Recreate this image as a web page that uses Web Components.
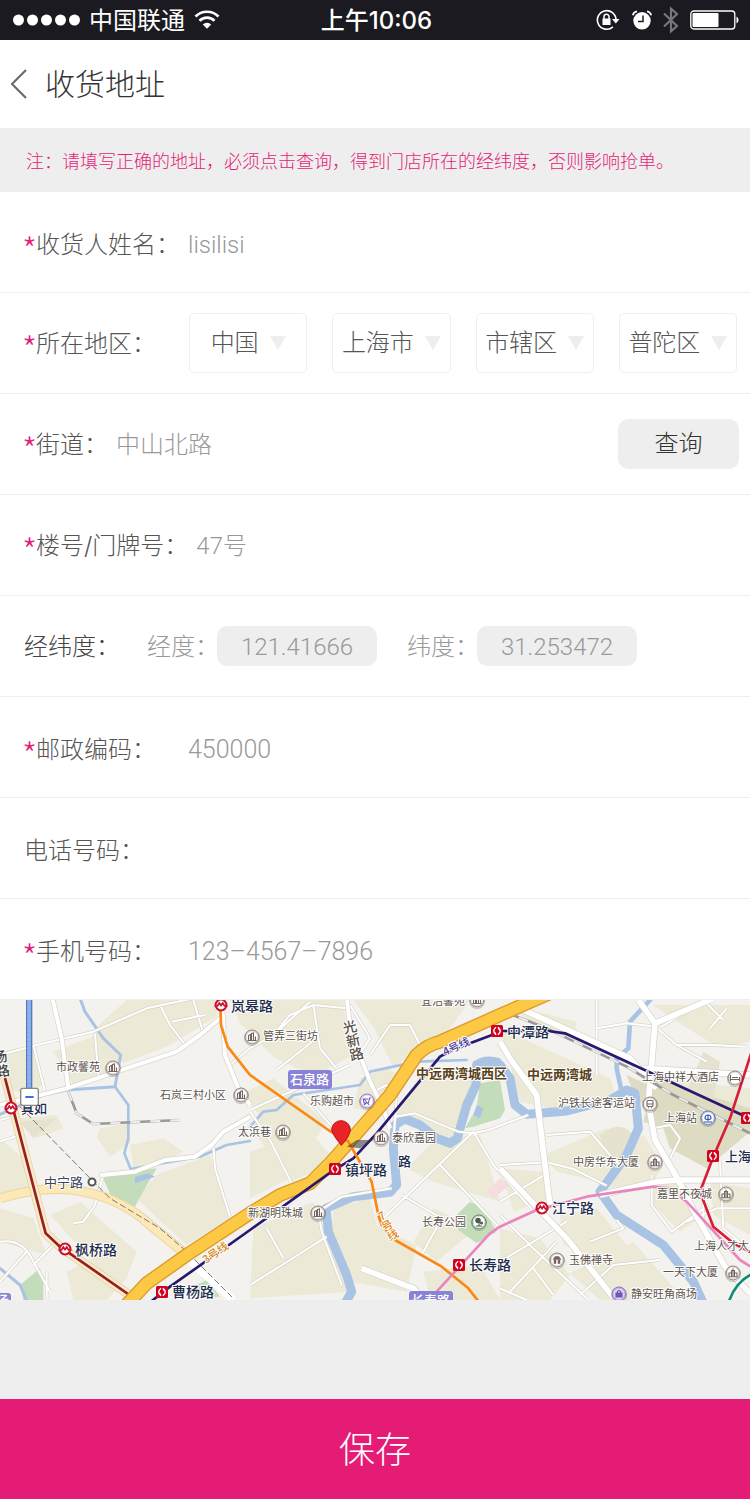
<!DOCTYPE html>
<html lang="zh-CN">
<head>
<meta charset="utf-8">
<meta name="viewport" content="width=device-width, initial-scale=1">
<title>收货地址</title>
<style>
  html, body { margin: 0; }
  body {
    background: #eee;
    color: #666;
    font-family: Inter, "Noto Sans CJK SC", sans-serif;
    font-size: 24px;
    font-weight: 300;
    line-height: 36px;
  }
</style>
</head>
<body>
<address-page></address-page>

<script>
const define = (name, html, setup) => {
  const template = document.createElement('template');
  template.innerHTML = html;
  customElements.define(name, class extends HTMLElement {
    connectedCallback() {
      if (this.shadowRoot) return;
      const root = this.attachShadow({ mode: 'open' });
      root.append(template.content.cloneNode(true));
      if (setup) setup(this, root);
    }
  });
};

/* ---------- status bar ---------- */
define('status-bar', `
<style>
  :host { display: grid; grid-template-columns: 1fr auto 1fr; align-items: center; height: 40px;
    padding: 0 10px 0 13px; background: #1b1a20; color: #fff; font-weight: 400; }
  .left, .right { display: flex; align-items: center; }
  .right { justify-content: flex-end; }
  .left { gap: 9px; }
  span { padding-top: 2px; }
  .time { font-weight: 500; }
  svg { display: block; flex: none; }
  .lock { margin-right: 12px; } .alarm { margin-right: 11px; } .bt { margin-right: 11px; }
</style>
<div class="left">
  <svg width="67" height="12" fill="#fff"><circle cx="5.500" cy="6" r="5.500"/><circle cx="19.500" cy="6" r="5.500"/><circle cx="33.500" cy="6" r="5.500"/><circle cx="47.500" cy="6" r="5.500"/><circle cx="61.500" cy="6" r="5.500"/></svg>
  <span>中国联通</span>
  <svg width="26" height="20" viewBox="0 0 26 20" fill="none" stroke="#fff" stroke-width="2.700"><path d="M1.500 6.500a16.300 16.300 0 0 1 23 0"/><path d="M5.500 10.700a10.600 10.600 0 0 1 15 0"/><path d="M13 18.800 8.800 14.500a6 6 0 0 1 8.400 0z" fill="#fff" stroke="none"/></svg>
</div>
<span class="time">上午10:06</span>
<div class="right">
  <svg class="lock" width="24" height="22" viewBox="0 0 24 22" fill="none" stroke="#fff" stroke-width="1.600"><path d="M16.900 17.900A9.300 9.300 0 1 1 20 11"/><path d="M16 10h7.500L19.800 14.500z" fill="#fff" stroke="none"/><rect x="6.500" y="9.500" width="8" height="6.500" fill="#fff" stroke="none"/><path d="M8 10V7.700a2.500 2.500 0 0 1 5 0V10" stroke-width="1.500"/></svg>
  <svg class="alarm" width="20" height="20" viewBox="0 0 20 20" fill="none"><circle cx="10" cy="10.800" r="8.700" fill="#fff"/><path d="M.8 5.200A5 5 0 0 1 5 1.300M19.200 5.200A5 5 0 0 0 15 1.300" stroke="#fff" stroke-width="1.700"/><path d="M11 5.500v6H6" stroke="#1b1a20" stroke-width="1.500"/></svg>
  <svg class="bt" width="16" height="28" viewBox="0 0 16 28" fill="none" stroke="#77767b" stroke-width="2.200"><path d="M1 7.500 14 20l-6 5.300V2.700L14 8 1 20.500"/></svg>
  <svg width="50" height="20" viewBox="0 0 50 20"><rect x=".800" y="1" width="44" height="18" rx="3" fill="none" stroke="#fff" stroke-width="1.300"/><rect x="2.500" y="3" width="26" height="14" rx="1" fill="#fff"/><path d="M46.500 6.500a4 4 0 0 1 0 7z" fill="#fff"/></svg>
</div>`);

/* ---------- page header ---------- */
define('page-header', `
<style>
  :host { display: flex; align-items: center; gap: 18px; height: 88px; padding: 0 10px; background: #fff; color: #333; }
  a { display: block; }
  svg { display: block; }
  h1 { margin: 0; font-size: 30px; font-weight: 300; line-height: 44px; }
</style>
<a href="#back" aria-label="返回"><svg width="17" height="30" viewBox="0 0 17 30" fill="none" stroke="#666" stroke-width="2"><path d="M16 1 2 15l14 14"/></svg></a>
<h1><slot></slot></h1>`);

define('notice-bar', `
<style>
  :host { display: block; padding: 20px 26px 16px; background: #eee; color: #e41c78; font-size: 18px; line-height: 28px; }
</style><slot></slot>`);

/* ---------- form rows ---------- */
define('form-row', `
<style>
  :host { display: flex; box-sizing: border-box; align-items: center; gap: 8px; min-height: 101px; padding: 0 11px 0 24px;
    background: #fff; border-bottom: 1px solid #eee; }
  :host([low]) { padding-top: 4px; }
</style><slot></slot>`);

const labelCss = `
  label, .label { flex: none; min-width: 156px; padding-top: 2px; color: #555; white-space: nowrap; }
  :host([compact]) label { min-width: 0; }
  :host([required]) label::before, :host([required]) .label::before {
    content: "*"; display: inline-block; width: 12px; color: #e41c78; font-family: "Noto Sans CJK SC", sans-serif;
    font-size: 34px; line-height: 0; text-indent: -2px; vertical-align: -10px; }`;

define('text-field', `
<style>
  :host { display: flex; flex: 1; align-items: center; gap: 8px; min-width: 0; }
  ${labelCss}
  input { flex: 1; min-width: 0; height: 36px; margin: 0; padding: 2px 0 0; border: 0; outline: 0;
    background: none; color: #999; font: inherit; font-family: Roboto, "Noto Sans CJK SC", sans-serif; }
  :host([numeric]) input { font-size: 25px; }
</style>
<label for="field"></label><input id="field" type="text">`,
(host, root) => {
  root.querySelector('label').textContent = host.getAttribute('label');
  root.querySelector('input').value = host.getAttribute('value') || '';
});

define('select-box', `
<style>
  :host { display: flex; align-items: center; justify-content: center; gap: 11px; height: 58px;
    border: 1px solid #eee; border-radius: 5px; }
  select { appearance: none; margin: 0; padding: 0; border: 0; outline: 0; background: none;
    color: #555; font: inherit; height: 36px; }
  svg { display: block; flex: none; }
</style>
<select><option></option></select>
<svg width="16" height="14" fill="#eee"><path d="M0 0h16L8 14z"/></svg>`,
(host, root) => {
  const select = root.querySelector('select');
  select.setAttribute('aria-label', host.getAttribute('label'));
  select.options[0].textContent = host.getAttribute('value');
  select.style.width = host.getAttribute('value').length + 'em';
});

define('region-field', `
<style>
  :host { display: flex; flex: 1; align-items: center; gap: 9px; padding-right: 2px; }
  ${labelCss}
  .boxes { flex: 1; display: grid; grid-template-columns: repeat(4, 1fr); gap: 25px; }
</style>
<span class="label">所在地区：</span>
<div class="boxes">
  <select-box label="国家" value="中国"></select-box>
  <select-box label="省市" value="上海市"></select-box>
  <select-box label="城市" value="市辖区"></select-box>
  <select-box label="区县" value="普陀区"></select-box>
</div>`);

define('coordinate-field', `
<style>
  :host { display: flex; align-items: center; gap: 30px; }
  .label { flex: none; width: 93px; padding-top: 2px; color: #444; white-space: nowrap; }
  .pair { display: flex; align-items: center; color: #999; }
  .pair label { width: 70px; padding-top: 2px; white-space: nowrap; }
  input { box-sizing: border-box; width: 160px; height: 40px; margin: 0; padding: 2px 0 0; border: 0; border-radius: 10px;
    outline: 0; background: #eee; color: #999; font: inherit; font-family: Roboto, sans-serif; text-align: center; }
</style>
<span class="label">经纬度：</span>
<div class="pair"><label for="lng">经度：</label><input id="lng" type="text" value="121.41666"></div>
<div class="pair"><label for="lat">纬度：</label><input id="lat" type="text" value="31.253472"></div>`);

define('query-button', `
<style>
  :host { display: block; flex: none; }
  button { width: 121px; height: 50px; padding: 0; border: 0; border-radius: 10px; background: #eee;
    color: #333; font: inherit; }
</style><button type="button"><slot></slot></button>`);

define('save-button', `
<style>
  :host { display: block; padding-top: 99px; }
  button { display: block; width: 100%; height: 100px; padding: 2px 0 0; border: 0; background: #e51c76; color: #fff;
    font: inherit; font-size: 36px; }
</style><button type="submit"><slot></slot></button>`);

/* ---------- map ---------- */
const NAVY = '#1c2b4c', BROWN = '#5c524b';
const stations = [['岚皋路',231,6],['中潭路',507,32],['枫桥路',75,250],['曹杨路',172,292],['镇坪路',345,170],
  ['江宁路',552,208],['长寿路',469,265],['上海',725,156],['真如',21,108],['路',398,161]];
const places = [['市政馨苑',56,67],['石岚三村小区',160,95],['太浜巷',238,132],['管弄三街坊',263,36],['乐购超市',310,101],
  ['泰欣嘉园',392,138],['新湖明珠城',248,213],['长寿公园',422,222],['宜浩馨苑',421,1],['玉佛禅寺',569,260],
  ['中房华东大厦',573,162],['沪铁长途客运站',558,103],['上海站',664,118],['上海中祥大酒店',642,77],
  ['嘉里不夜城',657,194],['上海人才大',694,246],['一天下大厦',663,272],['静安旺角商场',631,294]];
const text = (t, x, y, size, fill, extra = '') =>
  `<text x="${x}" y="${y + Math.round(size * .37)}" font-size="${size}" fill="${fill}" ${extra}>${t}</text>`;
const column = (t, x, y, size, fill, angle) =>
  `<text class="column" x="${x}" y="${y}" font-size="${size}" fill="${fill}" transform="rotate(${angle} ${x} ${y})">${t}</text>`;

const glyphs = {
  house: '<path d="M-3.500 3.500v-5l2-1v6M-.5 3.500v-7l2-.500v7.500M3.500 3.500v-4M-4.500 3.500h9"/>',
  tower: '<path d="M0-4.500V-3M-1.500 3.500v-6h3v6M-4 3.500V0h2.500M4 3.500V0H1.500M-4.500 3.700h9M0-2v5"/>',
  bus: '<rect x="-3" y="-3.500" width="6" height="6" rx="1"/><path d="M-3 0h6M-2 3.800h1M1 3.800h1"/>',
  bed: '<path d="M-4.500-3v6M-4.500 1.500h9M4.500-1v4M-3-.5h6"/>',
  tree: '<path d="M0 4V0M-3 4h6"/><circle cx="-1" cy="-1.500" r="2.200" fill="currentColor"/><circle cx="2.500" cy="1" r="1" fill="currentColor"/>',
  temple: '<path d="M-2-3.500h4l2 3h-8zM-3 0h2v3.500h-2zM1 0h2v3.500H1z" fill="currentColor" stroke-width=".5"/>',
  train: '<path d="M-3 0a3 3 0 1 1 6 0c0 2-6 2-6 0M-4 4h8M0-3v6"/>',
  cart: '<path d="M4-3H2.500l-1 5H-3l-.8-4h5M2 4l-5-6M-3 4l3-3"/>',
  bag: '<path d="M-3-1h6v4h-6z" fill="currentColor"/><path d="M-1.500-1v-1.500q1.500-2 3 0V-1"/>'
};
const pin = (kind, x, y, color = '#75645d', fill = '#fff') =>
  `<g transform="translate(${x} ${y})" color="${color}" stroke="currentColor" stroke-width="1.100" fill="none"><circle cy="1" r="7.500" stroke="#000" stroke-opacity=".2"/><circle r="7" fill="${fill}" stroke-width=".800"/><circle r="6" stroke-width=".300"/>${glyphs[kind]}</g>`;
const square = (x, y) => `<g transform="translate(${x} ${y})"><rect x="-6" y="-6" width="12" height="12" rx="1.500" fill="#d0021f"/><path d="M-1-3.700q-4.500 3.700 0 7.400M1-3.700q4.500 3.700 0 7.400M-2.500 1l1.500 2.700M2.500-1 1-3.700" fill="none" stroke="#fff" stroke-width="1.400"/></g>`;
const metro = (x, y) => `<g transform="translate(${x} ${y})"><circle r="5.400" fill="#fff" stroke="#c9102c" stroke-width="2"/><path d="M-6.500 1h3l1.800-3L0 .5 1.700-2l1.800 3h3" fill="none" stroke="#c9102c" stroke-width="1.700"/></g>`;

const minorRoads = 'M0 180l110-30 170-40 160-70 140-30M480 30l30 60 50 65M580 15l30 100M515 80l100-20M285 115l10 130M100 150l35 140M0 440l60-20M0 375l40-10M220 685l30-5 35-50 25-90M640 450l5 70 45 145M750 350l60 85 65 130M690 210l60-50 70-40 110-100M820 120l50-60 70-30 100 10M830 225L950 130M940 30l20 130 50 60M750 870l120-75 110-70M800 700l50 90M750 345L1050 210M910 295L1000 400M1050 30l60 100-40 60M1110 180l60-90h60l30 60M1120 290l40-20 30 40-10 130M1185 365l60-10 70 30 60 25 45 5 45-10 120-45M1175 580l-150 25-70 45 10 60 60 160M1420 410L1150 670M1320 510l180 190M1205 600l120 70-60 110M1420 410l60 100 130 150M1640 420l130-10 60 70 30 30M1790 240l0-225M1790 100l90-15 90 10M1500 510l140-8 80 20 100 50M1500 620l150-90M1500 660l100 100 160 150M1500 800l200-120M1530 890l140-150M1600 820l60 80M1500 880l80 35M1770 740l100-40-20-25M1740 900l100-90 140-15M1960 400l50-10 30 40-30 60M1960 90l70 60h110l100 5M2030 150l90 50M2110 550v120M1955 540l0 90 60 80 110-80M2250 640h-100l-90 40M2160 500l10 200 70 60M2110 15l60 60M2130 100l50-60M1985 95l130-80M0 740q70-10 100 60l50 90M100 810l60-60M0 860l80-90M140 830v80';
const mainRoads = 'M0 330l200-50 330-110 70-50 60-50M155 0l30 130 20 150M665 0l10 180 40 100 35 50M750 365l-80 45-35 40-50 35-90 10-90 35-100 10H310M1040 0l10 100 60 160 40 80 20 60';
const avenues = 'M1915 15l50 70-20 240 20 110 70 120 50 100 90 160 75 80M1500 140l30 50 80 110 20 170 20 160M1560 40l330 150 80 90M1500 520l200 210 150 190M1930 220l320 20M2030 555h220M1800 600l170-40 70-5M1965 85L2140 10M1085 820l155 60 35 40';
const road = (d, width) => `<path d="${d}" stroke="#d6d3c8" stroke-width="${width + 4}"/><path d="${d}" stroke="#fff" stroke-width="${width}"/>`;

define('city-map', `
<style>
  :host { display: block; }
  svg { display: block; width: 100%; height: auto; font-family: "Noto Sans CJK SC", sans-serif; font-weight: 500; }
  .halo text { paint-order: stroke; stroke: #fff; stroke-width: 2px; stroke-linejoin: round; }
  .halo .place text { font-weight: 400; }
  .column { writing-mode: vertical-rl; text-orientation: upright; }
</style>
<svg viewBox="0 0 750 300" role="img" aria-label="地图">
<rect width="750" height="300" fill="#f3f2ef"/>
<g transform="translate(0 -5) scale(.333333)" fill="none" stroke-linejoin="round">
  <g fill="#ecead7">
    <path d="M380 15h270v50l-150 90-130 50-90-100zM290 120l70 60-10 50-130 40-60-100zM0 170l100-20 30 120-60 30-60-30z"/>
    <path d="M60 370l110-10 20 40-80 30zM0 430l70 60 30 100-100 20zM300 400l90-15 0 60-60 40-40-60zM390 450l100-20 60 40-60 30-90 20z"/>
    <path d="M470 540l160-60 60 190-130 80-120-110-30-30zM150 660l90-40 170 150-30 80-110-60zM0 640l100 30 40 110-140-40zM200 830l120-60 60 80-60 65H220z"/>
    <path d="M690 15h340l20 170-110 60-120-60-100-100zM720 300l100-50 160 130-60 90-120-90zM780 330l150 80 80 90-140 60-110-150z"/>
    <path d="M1060 15h150l200 0-70 100-160 100-60-120zM1080 250l80-30 40 20-80 110-60-10zM1260 240l170-20 0 80-60 150-110-70-80-20z"/>
    <path d="M750 470l90-30 30 110-120 60zM760 700l180-80 30 80 90 190-310 20zM1000 640l110-30 20 80 120 60-30 140-170-30-60-80z"/>
    <path d="M1220 520l90-90 130-10 60 200-200-60zM1300 640l130 60-120 100-70-60zM1500 100l330 150 20 60-200 30-90-20zM1530 30l200 50-10 50-120-40z"/>
    <path d="M1960 30l290 0v110l-90 20-130-80zM1980 250l270 30v80l-200 0zM1630 480l190-80 70 50-90 110-130-30z"/>
    <path d="M1680 660l110-20 90 110-30 60-160-60zM1500 700l120 30 90 110-60 75h-150zM1960 560l100 10 40 100-60 40-80-80zM2130 560l120 20v140l-110-60zM1500 520l130 10 20 80-110 40z"/>
    <path d="M1900 740l140 160-20 15h-220l-90-80zM1270 830l170-20 60 105h-210zM1840 480l90-60 60 90-30 50-140 20z"/>
  </g>
  <path d="M1960 250l290 90v70l-130 110-110-60-20-60-60-20zM1880 240l110 50 30 50-110-20z" fill="#dedbc3"/>
  <path d="M2110 170l50 30-20 120-80-30zM1800 420q60-50 100 0l-20 60-60 20zM60 380l110-10-70 60z" fill="#e5e2d0"/>
  <path d="M1500 550l30 20-50 40-20-20z" fill="#f6dbe0"/>
  <g fill="#c3ddba">
    <path d="M305 542l165-22-35 60-30 55-70-30z"/><path d="M60 870l60-50 10 40 0 55H70z"/>
    <path d="M1440 265l60-10 15 90-15 25-80 25-25 5 35-60z"/><path d="M1370 660l40-40 40 20 40 70-60 35-55-40z"/><path d="M570 880l50-25 40 50h-70z"/>
  </g>
  <g stroke="#a9c3e4" stroke-linecap="round">
    <path d="M242 15L255 50 310 130 362 180 345 275 200 285 130 300 0 358" stroke-width="9"/>
    <path d="M345 275L385 330V430L373 475 392 522 600 485 680 450 750 438M750 395L790 350 830 345 880 300 1080 270 1110 230 1250 200 1400 195" stroke-width="8"/>
    <path d="M1035 925L1055 890 1040 840 985 710 978 640 1060 605 1170 592 1190 570 1180 460 1185 390 1215 372 1260 390 1310 430 1350 445 1372 430 1400 330 1428 270 1430 210 1500 210 1530 250 1545 330 1580 358 1700 348 1830 315 1880 285 1905 295 1915 400 1880 480 1800 590 1850 660 1990 750 2080 860 2110 925" stroke-width="27"/>
    <path d="M1950 15L1890 80 1885 160 1850 190V220L1865 290" stroke-width="14"/>
    <path d="M0 820l60 50 20 45" stroke-width="9"/>
  </g>
  <path d="M1420 200q35-25 80-10l20 30-60 30-50 0zM405 545l40-10 20 10-60 20zM1430 330l20 10-10 30-20-10z" fill="#a9c3e4"/>
  ${road(minorRoads, 6)}
  ${road(mainRoads, 12)}
  ${road(avenues, 17)}
  <path d="M0 610Q150 565 260 592Q370 615 450 690L555 775" stroke="#e9d7a5" stroke-width="30"/>
  <path d="M0 610Q150 565 260 592Q370 615 450 690L555 775" stroke="#fde8b8" stroke-width="24"/>
  <path d="M560 790L700 915" stroke="#fff" stroke-width="22"/>
  <path d="M10 230L137 715 180 755 410 915" stroke="#e3d3a8" stroke-width="28"/>
  <path d="M10 230L137 715 180 755 410 915" stroke="#fdebc5" stroke-width="23"/>
  <path d="M10 230L137 715 180 755 410 915" stroke="#93202b" stroke-width="8"/>
  <path d="M205 290l25 65 50 32 260-12M1500 45L1640 100 1880 215 2020 300 2250 415" stroke="#999" stroke-width="8"/>
  <path d="M205 290l25 65 50 32 260-12M1500 45L1640 100 1880 215 2020 300 2250 415" stroke="#eee" stroke-width="6" stroke-dasharray="30 30"/>
  <path d="M60 335L290 570 330 610 480 700 560 770 700 910" stroke="#777" stroke-width="3" stroke-dasharray="20 8"/>
  <path d="M370 940L440 865 560 780 750 655 840 600 930 565 990 505 1070 415 1170 300 1250 180Q1280 150 1320 140L1500 60 1660 -10" stroke="#dc9a28" stroke-width="42"/>
  <path d="M370 940L440 865 560 780 750 655 840 600 930 565 990 505 1070 415 1170 300 1250 180Q1280 150 1320 140L1500 60 1660 -10" stroke="#fdc944" stroke-width="34"/>
  <g stroke-width="8">
    <path d="M440 930L510 875 750 705 995 530 1060 490 1130 415 1320 185Q1370 155 1410 145L1470 122 1500 108H1645L1695 115 2220 357 2260 375" stroke="#29186f"/>
    <path d="M661 30L663 90 683 155 750 240 985 405 1045 440 1085 510 1115 560 1135 660 1145 690 1185 735 1325 815 1405 880 1440 925" stroke="#fb8810"/>
    <path d="M1310 890L1470 715 1500 695 1610 645 1760 605 1960 575 2010 580 2060 620 2220 795 2260 820" stroke="#e886bd"/>
    <path d="M2255 170L2190 370 2140 485 2100 590 2140 695 2200 745 2260 775" stroke="#d81e35"/>
    <path d="M2185 925Q2205 860 2260 835" stroke="#0c8c72"/>
  </g>
  <path d="M1040 455l30-20h50l-40 25z" fill="#333" opacity=".55"/>
  <path d="M1024 451q-25-30-29-46a28 28 0 1 1 56 0q-2 20-27 46z" fill="#ea2329" stroke="#b30f16" stroke-width="3"/>
  <rect x="80" y="0" width="15" height="285" fill="#7fa6e8" stroke="#5479bd" stroke-width="4"/>
  <path d="M87 15v260" stroke="#8fb2ec" stroke-width="10" stroke-dasharray="12 2"/>
</g>
<g class="halo">
  ${stations.map(([t, x, y]) => text(t, x, y, t.length < 3 ? 13 : 14, NAVY)).join('')}
  <g class="place">${text('中宁路', 44, 182, 13, '#3b4358')}${places.map(([t, x, y]) => text(t, x, y, 11, BROWN)).join('')}</g>
  ${text('中远两湾城西区', 416, 73, 13, '#5a4218', 'font-weight="700"')}
  ${text('中远两湾城', 527, 74, 13, '#5a4218', 'font-weight="700"')}
  ${column('光新路', 348, 20, 14, BROWN, -14)}
  ${column('杨路', -1, 50, 14, '#444', -10)}
  <text x="445" y="56" font-size="11" fill="#4b3b96" transform="rotate(-25 445 56)">4号线</text>
  <text x="206" y="264" font-size="11" fill="#d98a22" transform="rotate(-35 206 264)">3号线</text>
  ${column('7号线', 379, 211, 11, '#e08412', -30)}
</g>
<g transform="translate(0 -5) scale(.333333)"><rect x="62" y="280" width="53" height="51" rx="6" fill="#fff" stroke="#888" stroke-width="4"/><path d="M76 306h25" stroke="#3376d8" stroke-width="6"/></g>
<g fill="#8883d6"><rect x="288" y="70" width="44" height="19" rx="3"/><rect x="409" y="291" width="44" height="18" rx="3"/><rect x="-5" y="293" width="16" height="18" rx="3"/></g>
${text('石泉路', 290, 79, 13, '#fff')}${text('长寿路', 411, 300, 13, '#fff')}${text('汤', -4, 300, 13, '#fff')}
${[[221,5],[65,249],[11,108],[542,208]].map(p => metro(...p)).join('')}
${[[497,31],[162,292],[335,169],[459,265],[713,156],[747,118]].map(p => square(...p)).join('')}
<circle cx="92" cy="182" r="3.500" fill="#fff" stroke="#555" stroke-width="2"/>
${[[113,68],[241,95],[283,132],[252,37],[381,138],[318,213],[477,0]].map(p => pin('house', ...p)).join('')}
${[[655,162],[726,194],[733,273]].map(p => pin('tower', ...p)).join('')}
${pin('bus', 650, 104)}${pin('bed', 735, 78)}${pin('tree', 479, 222, '#466049')}${pin('temple', 557, 260)}
${pin('train', 708, 118, '#3555a8')}${pin('cart', 367, 101, '#7759b5')}${pin('bag', 619, 294, '#7455b5', '#dcd2f3')}
</svg>`);

/* ---------- page ---------- */
define('address-page', `
<style>
  :host { display: block; }
  form { display: block; margin: 0; }
</style>
<status-bar></status-bar>
<page-header>收货地址</page-header>
<notice-bar>注：请填写正确的地址，必须点击查询，得到门店所在的经纬度，否则影响抢单。</notice-bar>
<form>
  <form-row low><text-field required label="收货人姓名：" value="lisilisi"></text-field></form-row>
  <form-row><region-field required></region-field></form-row>
  <form-row><text-field required compact label="街道：" value="中山北路"></text-field><query-button>查询</query-button></form-row>
  <form-row><text-field required compact label="楼号/门牌号：" value="47号"></text-field></form-row>
  <form-row><coordinate-field></coordinate-field></form-row>
  <form-row low><text-field required numeric label="邮政编码：" value="450000"></text-field></form-row>
  <form-row low><text-field label="电话号码："></text-field></form-row>
  <form-row low><text-field required numeric label="手机号码：" value="123–4567–7896"></text-field></form-row>
  <city-map></city-map>
  <save-button>保存</save-button>
</form>`);
</script>
</body>
</html>
